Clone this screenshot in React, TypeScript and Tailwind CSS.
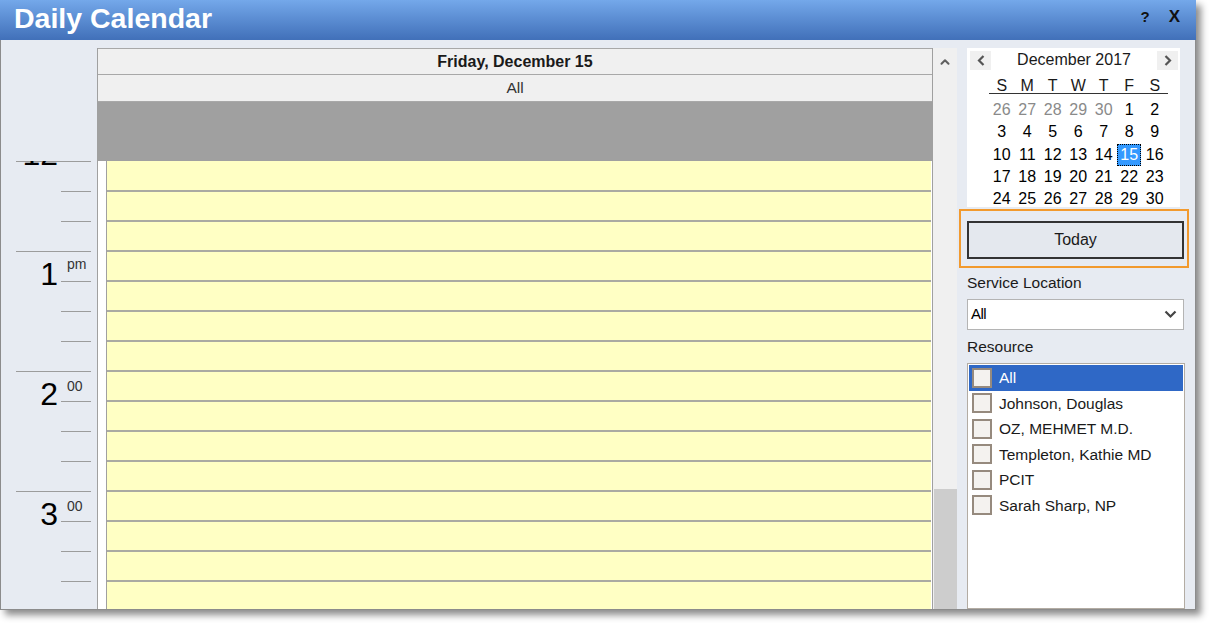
import { ChevronUp } from "lucide-react";

const dayNames = ["S", "M", "T", "W", "T", "F", "S"];

const weeks: { d: number; prev?: boolean }[][] = [
  [{ d: 26, prev: true }, { d: 27, prev: true }, { d: 28, prev: true }, { d: 29, prev: true }, { d: 30, prev: true }, { d: 1 }, { d: 2 }],
  [{ d: 3 }, { d: 4 }, { d: 5 }, { d: 6 }, { d: 7 }, { d: 8 }, { d: 9 }],
  [{ d: 10 }, { d: 11 }, { d: 12 }, { d: 13 }, { d: 14 }, { d: 15 }, { d: 16 }],
  [{ d: 17 }, { d: 18 }, { d: 19 }, { d: 20 }, { d: 21 }, { d: 22 }, { d: 23 }],
  [{ d: 24 }, { d: 25 }, { d: 26 }, { d: 27 }, { d: 28 }, { d: 29 }, { d: 30 }],
];

const hours = [
  { h: "12", sup: "pm" },
  { h: "1", sup: "pm" },
  { h: "2", sup: "00" },
  { h: "3", sup: "00" },
];

const resources = ["All", "Johnson, Douglas", "OZ, MEHMET M.D.", "Templeton, Kathie MD", "PCIT", "Sarah Sharp, NP"];

function HourBlock({ h, sup }: { h: string; sup: string }) {
  return (
    <div className="flex flex-col h-[120px]">
      <div className="ml-[15px] w-[75px] h-px bg-[#9c9c9c]" />
      <div className="flex">
        <div className="w-[57px] pt-[6px] text-right text-[32px] leading-[32px] text-black">{h}</div>
        <div className="ml-[3px] w-[30px] flex flex-col">
          <div className={`h-[29px] pl-[6px] text-[14px] leading-[14px] text-[#333] ${sup === "pm" ? "pt-[5px]" : "pt-[7px]"}`}>
            {sup}
          </div>
          <div className="h-px bg-[#9c9c9c]" />
          <div className="h-[29px]" />
          <div className="h-px bg-[#9c9c9c]" />
          <div className="h-[29px]" />
          <div className="h-px bg-[#9c9c9c]" />
          <div className="h-[29px]" />
        </div>
      </div>
    </div>
  );
}

function Arrow({ dir }: { dir: "left" | "right" }) {
  return (
    <div className="w-[21px] h-[19px] bg-[#f0f0f0] flex items-center justify-center">
      <svg width="8" height="11" viewBox="0 0 8 11">
        <polyline
          points={dir === "left" ? "6.5,1 2,5.5 6.5,10" : "1.5,1 6,5.5 1.5,10"}
          fill="none"
          stroke="#555"
          strokeWidth="2.2"
        />
      </svg>
    </div>
  );
}

export default function App() {
  return (
    <div className="w-[1216px] h-[625px] bg-white font-['Liberation_Sans',Arial,sans-serif]">
      <div className="w-[1196px] h-[610px] flex flex-col shadow-[5px_5px_7px_rgba(0,0,0,0.45)]">
        {/* title bar */}
        <div className="h-[40px] flex items-center bg-gradient-to-b from-[#74a8ea] to-[#4170b9] pl-[14px] pr-[16px]">
          <div className="text-[28.5px] leading-none font-bold text-white pb-[3px]">Daily Calendar</div>
          <div className="ml-auto flex items-center gap-[19px] pb-[6px] text-[#111] font-bold">
            <span className="text-[15px]">?</span>
            <span className="text-[17px]">X</span>
          </div>
        </div>

        {/* body */}
        <div className="h-[570px] flex bg-[#e7ebf2] border-l border-r border-b border-[#8c8c8c]">
          {/* time gutter */}
          <div className="w-[96px] flex flex-col">
            <div className="h-[121px]" />
            <div className="flex-1 overflow-hidden flex flex-col">
              <div className="ml-[15px] w-[75px] h-px bg-[#9c9c9c] shrink-0" />
              <div className="-mt-[31px]">
                {hours.map((x) => (
                  <HourBlock key={x.h} h={x.h} sup={x.sup} />
                ))}
              </div>
            </div>
          </div>

          {/* day column */}
          <div className="w-[836px] pt-[8px] flex flex-col">
            <div className="border-l border-r border-[#a0a0a0] flex flex-col flex-1 min-h-0">
              <div className="h-[27px] bg-[#f0f0f0] border-t border-b border-[#a8a8a8] flex items-center justify-center text-[16px] font-bold text-[#1a1a1a]">
                Friday, December 15
              </div>
              <div className="h-[27px] bg-[#f0f0f0] border-b border-[#a8a8a8] flex items-center justify-center text-[15.5px] text-[#333]">
                All
              </div>
              <div className="h-[59px] bg-[#a0a0a0]" />
              <div className="flex-1 min-h-0 flex overflow-hidden">
                <div className="w-[8px] bg-white" />
                <div className="w-px bg-[#a0a0a0]" />
                <div className="flex-1 bg-[#ffffc4] flex flex-col pt-px">
                  {Array.from({ length: 16 }).map((_, i) => (
                    <div key={i} className="h-[30px] shrink-0 border-b-2 border-[#aaaaa2]" />
                  ))}
                </div>
                <div className="w-px bg-white" />
              </div>
            </div>
          </div>

          {/* scrollbar */}
          <div className="w-[24px] pt-[8px] flex flex-col">
            <div className="flex-1 bg-[#f0f0f0] flex flex-col">
              <div className="h-[28px] flex items-center justify-center">
                <ChevronUp size={14} strokeWidth={3.5} color="#606060" />
              </div>
              <div className="flex-1" />
              <div className="h-[120px] ml-px bg-[#cdcdcd]" />
            </div>
          </div>

          {/* right panel */}
          <div className="w-[238px] pl-[10px] pt-[8px] flex flex-col">
            <div className="w-[213px] h-[159px] bg-white overflow-hidden flex flex-col">
              <div className="h-[26px] flex items-center justify-between pl-[3px] pr-[2px]">
                <Arrow dir="left" />
                <span className="text-[16px] text-[#1a1a1a]">December 2017</span>
                <Arrow dir="right" />
              </div>
              <div className="ml-[22px] w-[179px] grid grid-cols-[repeat(7,25.5px)] h-[22px] pt-[2px] border-b border-[#333] items-center text-[16px] text-[#1a1a1a]">
                {dayNames.map((d, i) => (
                  <div key={i} className="text-center">
                    {d}
                  </div>
                ))}
              </div>
              <div className="ml-[22px] w-[179px] pt-[4px]">
                {weeks.map((w, wi) => (
                  <div key={wi} className="grid grid-cols-[repeat(7,25.5px)] h-[22.3px] items-center text-[16px]">
                    {w.map((c, ci) =>
                      c.d === 15 && !c.prev ? (
                        <div key={ci} className="flex justify-center">
                          <span className="w-[24px] h-[22px] flex items-center justify-center bg-[#3399ff] border border-dotted border-black text-white">
                            15
                          </span>
                        </div>
                      ) : (
                        <div key={ci} className={`text-center ${c.prev ? "text-[#8a8a8a]" : "text-black"}`}>
                          {c.d}
                        </div>
                      )
                    )}
                  </div>
                ))}
              </div>
            </div>

            <div className="-ml-[8px] mt-[2px] w-[230px] h-[59px] border-2 border-[#f29a2e] pl-[6px] pt-[10px]">
              <div className="w-[217px] h-[38px] border-2 border-[#333] bg-[#e4e8ee] flex items-center justify-center text-[16px] text-[#1a1a1a]">
                Today
              </div>
            </div>

            <div className="mt-[5px] h-[19px] text-[15.5px] leading-[19px] text-[#1a1a1a]">Service Location</div>
            <div className="mt-[7px] w-[217px] h-[31px] bg-white border border-[#b4b4b4] flex items-center pl-[3px] pr-[6px] text-[15px] text-black">
              <span className="tracking-[-0.5px]">All</span>
              <svg className="ml-auto" width="13" height="9" viewBox="0 0 13 9">
                <polyline points="1.5,1.5 6.5,6.5 11.5,1.5" fill="none" stroke="#444" strokeWidth="2.2" />
              </svg>
            </div>

            <div className="mt-[7px] h-[19px] text-[15.5px] leading-[19px] text-[#1a1a1a]">Resource</div>
            <div className="mt-[7px] w-[218px] flex-1 bg-white border border-[#b3aca3] p-px flex flex-col">
              {resources.map((r, i) => (
                <div
                  key={r}
                  className={`h-[25.5px] shrink-0 flex items-center pl-[3px] gap-[7px] text-[15.5px] ${
                    i === 0 ? "bg-[#2f68c6] text-white" : "text-[#1a1a1a]"
                  }`}
                >
                  <div className="w-[20px] h-[20px] border-2 border-[#968a7e] bg-[#f4f2ef]" />
                  <span>{r}</span>
                </div>
              ))}
            </div>
          </div>
        </div>
      </div>
    </div>
  );
}
